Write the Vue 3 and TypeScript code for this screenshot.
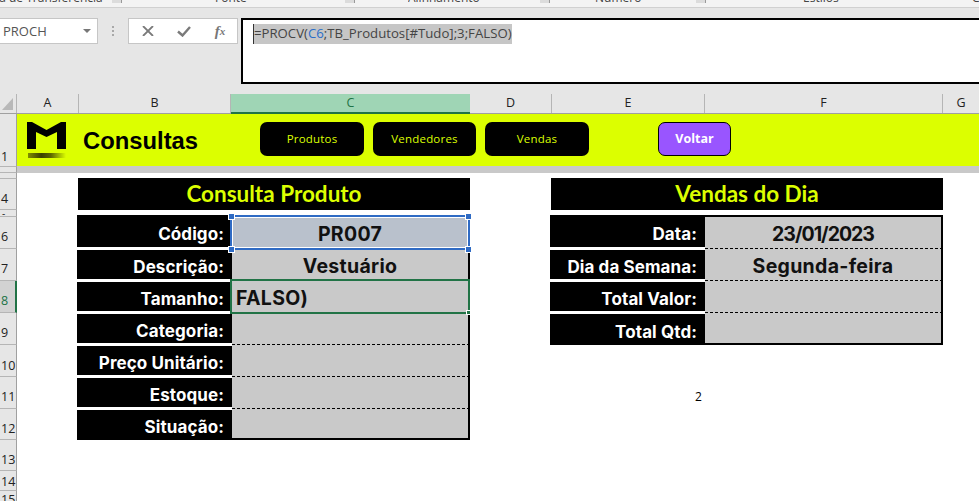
<script setup lang="ts">
const cols = [
  { name: 'A', w: 62 },
  { name: 'B', w: 152 },
  { name: 'C', w: 239, active: true },
  { name: 'D', w: 82 },
  { name: 'E', w: 153 },
  { name: 'F', w: 238 },
  { name: 'G', w: 37 },
]
const rowHeads = [
  { n: '1', h: 53, pad: 2 }, { n: '', h: 6, pad: 0 }, { n: '', h: 6, pad: 0 }, { n: '4', h: 31, pad: 3 }, { n: '-', h: 7, pad: 0, tiny: true },
  { n: '6', h: 32, pad: 4 }, { n: '7', h: 32, pad: 4 }, { n: '8', h: 32, pad: 4, active: true }, { n: '9', h: 32, pad: 4 },
  { n: '10', h: 32, pad: 3 }, { n: '11', h: 32, pad: 4 }, { n: '12', h: 31, pad: 3 }, { n: '13', h: 31, pad: 3 },
  { n: '14', h: 20, pad: 1 }, { n: '15', h: 21, pad: 4 },
]
const ribbon = [
  { t: 'Área de Transferência', w: 235, launcher: 9 },
  { t: 'Fonte', w: 193, launcher: 98 },
  { t: 'Alinhamento', w: 187, launcher: 60 },
  { t: 'Número', w: 208, launcher: 55 },
  { t: 'Estilos', w: 169, launcher: 0 },
  { t: 'C', w: 10, launcher: 0 },
]
const productRows = [
  { label: 'Código:', value: 'PR007', state: 'sel' },
  { label: 'Descrição:', value: 'Vestuário' },
  { label: 'Tamanho:', value: 'FALSO)', state: 'edit' },
  { label: 'Categoria:', value: '' },
  { label: 'Preço Unitário:', value: '' },
  { label: 'Estoque:', value: '' },
  { label: 'Situação:', value: '' },
]
const salesRows = [
  { label: 'Data:', value: '23/01/2023', state: 'tight' },
  { label: 'Dia da Semana:', value: 'Segunda-feira' },
  { label: 'Total Valor:', value: '' },
  { label: 'Total Qtd:', value: '' },
]
</script>

<template>
  <div class="app">
    <div class="ribbon">
      <div class="ribbon-row">
        <span v-for="r in ribbon" :key="r.t" class="ribbon-item" :style="{ width: r.w + 'px' }">
          <span>{{ r.t }}</span>
          <i v-if="r.launcher" class="launch" :style="{ marginLeft: r.launcher + 'px' }"></i>
        </span>
      </div>
    </div>

    <div class="fbar">
      <div class="namebox"><span>PROCH</span><i class="caret"></i></div>
      <div class="grip"><b></b><b></b><b></b></div>
      <div class="fbtns">
        <span class="fbtn"><svg width="12" height="10" viewBox="0 0 12 10"><path d="M1 0l10 10M11 0L1 10" stroke="#7a7a7a" stroke-width="1.8" fill="none" /></svg></span>
        <span class="fbtn"><svg width="14" height="11" viewBox="0 0 14 11"><path d="M1 5.5l4.5 4L13 1" stroke="#7a7a7a" stroke-width="2.4" fill="none" /></svg></span>
        <span class="fbtn fx">f<small>x</small></span>
      </div>
      <div class="formula">
        <span class="fsel">=PROCV(<em>C6</em>;TB_Produtos[#Tudo];3;FALSO)</span>
      </div>
    </div>

    <div class="colheads">
      <div class="corner"><i></i></div>
      <div v-for="c in cols" :key="c.name" class="colhead" :class="{ on: c.active }" :style="{ width: c.w + 'px' }">{{ c.name }}</div>
    </div>

    <div class="sheet">
      <div class="rowheads">
        <div
          v-for="(r, i) in rowHeads"
          :key="i"
          class="rowhead"
          :class="{ on: r.active, tiny: r.tiny }"
          :style="{ height: r.h + 'px', paddingBottom: r.pad + 'px' }"
        >{{ r.n }}</div>
      </div>

      <div class="canvas">
        <div class="banner">
          <svg class="logo" width="40" height="37" viewBox="0 0 40 37">
            <defs>
              <linearGradient id="sh" x1="0" x2="1" y1="0" y2="0">
                <stop offset="0" stop-color="#7f8f00" />
                <stop offset="0.35" stop-color="#3a4000" />
                <stop offset="0.6" stop-color="#5c6600" />
                <stop offset="1" stop-color="#dcff00" />
              </linearGradient>
            </defs>
            <path d="M0 0 H5 L19.5 8 L34 0 H39 V27 H30 V10 L19.5 15 L9 10 V27 H0 Z" fill="#000" />
            <rect x="1" y="31" width="38" height="5" fill="url(#sh)" />
          </svg>
          <span class="brand">Consultas</span>
          <div class="navs">
            <button class="nav">Produtos</button>
            <button class="nav mid">Vendedores</button>
            <button class="nav">Vendas</button>
          </div>
          <button class="back">Voltar</button>
        </div>
        <div class="band"></div>

        <div class="panels">
          <section class="panel left">
            <h2>Consulta Produto</h2>
            <div class="table">
              <div v-for="r in productRows" :key="r.label" class="row">
                <div class="label">{{ r.label }}</div>
                <div class="value" :class="r.state">
                  <span>{{ r.value }}</span>
                  <template v-if="r.state === 'sel'">
                    <i class="frame blue"></i>
                    <i class="h tl"></i><i class="h tr"></i><i class="h bl"></i><i class="h br"></i>
                  </template>
                  <template v-if="r.state === 'edit'">
                    <i class="frame green"></i><i class="fill"></i>
                  </template>
                </div>
              </div>
            </div>
          </section>

          <section class="panel right">
            <h2>Vendas do Dia</h2>
            <div class="table">
              <div v-for="r in salesRows" :key="r.label" class="row">
                <div class="label">{{ r.label }}</div>
                <div class="value" :class="r.state"><span>{{ r.value }}</span></div>
              </div>
            </div>
            <div class="two">2</div>
          </section>
        </div>
      </div>
    </div>
  </div>
</template>

<style scoped>
.app {
  width: 979px;
  height: 501px;
  overflow: hidden;
  background: #fff;
  font-family: "Open Sans", "Liberation Sans", sans-serif;
}
.ribbon {
  height: 8px;
  box-sizing: border-box;
  background: #f3f3f3;
  border-bottom: 1px solid #d0d0d0;
  overflow: hidden;
}
.ribbon-row {
  display: flex;
  margin: -10px 0 0 -20px;
  height: 16px;
  line-height: 16px;
  font-size: 12px;
  color: #444;
  white-space: nowrap;
}
.ribbon-item { display: flex; align-items: flex-start; flex: none; overflow: hidden; }
.launch {
  flex: none;
  width: 10px;
  height: 13px;
  box-sizing: border-box;
  background: #dcdcdc;
  border-right: 1px solid #999;
}
.fbar {
  height: 86px;
  box-sizing: border-box;
  background: #e6e6e6;
  padding-top: 10px;
  display: flex;
  align-items: flex-start;
}
.namebox {
  width: 98px;
  height: 26px;
  box-sizing: border-box;
  background: #fff;
  border: 1px solid #c6c6c6;
  border-left: 0;
  display: flex;
  align-items: center;
  justify-content: space-between;
  padding: 0 6px 0 3px;
  font-size: 13px;
  color: #555;
}
.caret {
  width: 0;
  height: 0;
  border-left: 4px solid transparent;
  border-right: 4px solid transparent;
  border-top: 4px solid #777;
}
.grip {
  width: 30px;
  height: 26px;
  display: flex;
  flex-direction: column;
  align-items: center;
  justify-content: center;
  gap: 2px;
}
.grip b { width: 2px; height: 2px; background: #a8a8a8; }
.fbtns {
  width: 110px;
  height: 26px;
  box-sizing: border-box;
  background: #fff;
  border: 1px solid #c6c6c6;
  display: flex;
  align-items: center;
  padding-left: 1px;
}
.fbtn {
  flex: none;
  width: 36px;
  display: flex;
  align-items: center;
  justify-content: center;
}
.fx {
  font-family: "Liberation Serif", serif;
  font-style: italic;
  font-weight: 700;
  font-size: 15px;
  color: #777;
}
.fx small { font-size: 11px; }
.formula {
  width: 738px;
  margin-left: 3px;
  height: 66px;
  box-sizing: border-box;
  background: #fff;
  border: 2px solid #000;
  border-right: 0;
  padding: 1px 0 0 10px;
}
.fsel {
  display: inline-block;
  height: 20px;
  line-height: 18px;
  background: #c6c6c6;
  border-left: 1px solid #333;
  font-size: 13.2px;
  color: #444;
  white-space: nowrap;
}
.fsel em { font-style: normal; color: #2a6fc9; }
.colheads {
  display: flex;
  height: 20px;
  background: #e6e6e6;
  box-sizing: border-box;
  border-bottom: 1px solid #a0a0a0;
}
.corner {
  width: 17px;
  flex: none;
  box-sizing: border-box;
  border-right: 1px solid #b5b5b5;
  position: relative;
}
.corner i {
  position: absolute;
  left: 2px;
  bottom: 3px;
  width: 0;
  height: 0;
  border-left: 11px solid transparent;
  border-bottom: 12px solid #b8b8b8;
}
.colhead {
  flex: none;
  box-sizing: border-box;
  border-right: 1px solid #b5b5b5;
  text-align: center;
  font-size: 12.5px;
  line-height: 18px;
  color: #222;
}
.colhead.on {
  background: #9fd5b5;
  color: #217346;
  height: 20px;
  border-right: 0;
  border-bottom: 2px solid #217346;
}
.sheet { display: flex; }
.rowheads { width: 17px; flex: none; background: #e6e6e6; }
.rowhead {
  box-sizing: border-box;
  border-right: 1px solid #a0a0a0;
  border-bottom: 1px solid #b5b5b5;
  font-size: 12.5px;
  line-height: 15px;
  color: #222;
  padding-left: 1px;
  display: flex;
  align-items: flex-end;
  overflow: hidden;
}
.rowhead.tiny { line-height: 6px; font-size: 10px; align-items: flex-start; padding-left: 2px; }
.rowhead.on {
  background: #d2d2d2;
  color: #217346;
  border-right: 2px solid #217346;
}
.canvas { flex: 1; min-width: 0; }
.banner {
  height: 52px;
  background: #dcff00;
  display: flex;
  align-items: flex-start;
  padding: 8px 0 0 10px;
  box-sizing: border-box;
}
.logo { flex: none; margin-right: 16px; }
.brand {
  font-family: "Liberation Sans", Arial, sans-serif;
  font-weight: 700;
  font-size: 23.8px;
  line-height: 38px;
  color: #000;
  width: 177px;
  flex: none;
}
.navs { display: flex; gap: 9px; flex: none; }
.nav {
  width: 104px;
  height: 34px;
  border: 0;
  border-radius: 7px;
  background: #000;
  color: #dcff00;
  font-family: "Open Sans", sans-serif;
  font-size: 11.5px;
  letter-spacing: 0.2px;
  padding: 0 0 2px;
}
.nav.mid { width: 103px; }
.back {
  margin-left: 69px;
  width: 73px;
  height: 34px;
  box-sizing: border-box;
  border: 1px solid #000;
  border-radius: 7px;
  background: #9955ff;
  color: #fff;
  font-family: "Open Sans", sans-serif;
  font-weight: 700;
  font-size: 12.5px;
  padding: 0 0 2px;
}
.band { height: 7px; background: #c9c9c9; }
.panels {
  display: flex;
  padding: 5px 0 0 60px;
}
.panel { position: relative; flex: none; }
.panel.left { width: 393px; }
.panel.right { width: 393px; margin-left: 80px; }
.panel h2 {
  margin: 0 0 5px 1px;
  height: 32px;
  line-height: 32px;
  background: #000;
  color: #dcff00;
  text-align: center;
  font-family: "Lato", "Open Sans", sans-serif;
  font-weight: 700;
  font-size: 22.5px;
}
.row { display: flex; height: 32px; }
.row:first-child { height: 34px; }
.left .row:last-child { height: 31px; }
.label {
  flex: none;
  width: 155px;
  box-sizing: border-box;
  background: #000;
  color: #fff;
  border-top: 1px solid #fff;
  border-bottom: 2px solid #fff;
  padding: 4px 8px 0 0;
  display: flex;
  align-items: center;
  justify-content: flex-end;
  font-family: "Inter", sans-serif;
  font-weight: 700;
  font-size: 17px;
  letter-spacing: 0.1px;
  white-space: nowrap;
}
.row:first-child .label { border-top: 0; padding-top: 6px; }
.row:last-child .label { border-bottom: 0; }
.value {
  flex: 1;
  position: relative;
  box-sizing: border-box;
  background: #c9c9c9;
  border-right: 2px solid #000;
  border-bottom: 1px dashed #000;
  padding-top: 2px;
  display: flex;
  align-items: center;
  justify-content: center;
  font-family: "Inter", sans-serif;
  font-weight: 700;
  font-size: 19.5px;
  letter-spacing: 0.3px;
  color: #111;
  white-space: nowrap;
}
.row:first-child .value { border-top: 2px solid #000; }
.row:last-child .value { border-bottom: 2px solid #000; }
.value.sel { background: #b9c1cc; z-index: 2; }
.value.edit { justify-content: flex-start; padding-left: 4px; z-index: 1; }
.value.tight { letter-spacing: -1px; }
.frame {
  position: absolute;
  pointer-events: none;
  box-sizing: border-box;
}
.frame.blue {
  left: -2px;
  right: -2px;
  top: -2px;
  bottom: -2px;
  border: 2px solid #2f6bc4;
  outline: 1px solid #fff;
  outline-offset: -3px;
}
.frame.green {
  left: -2px;
  right: -2px;
  top: -2px;
  bottom: -2px;
  border: 2px solid #217346;
}
.h {
  position: absolute;
  width: 7px;
  height: 7px;
  box-sizing: border-box;
  background: #2f6bc4;
  border: 1px solid #fff;
}
.h.tl { left: -4px; top: -4px; }
.h.tr { right: -4px; top: -4px; }
.h.bl { left: -4px; bottom: -5px; }
.h.br { right: -4px; bottom: -5px; }
.fill {
  position: absolute;
  right: -3px;
  bottom: -3px;
  box-sizing: content-box;
  width: 3px;
  height: 3px;
  background: #217346;
  border: 1px solid #fff;
}
.two {
  position: absolute;
  left: 145px;
  top: 210px;
  font-family: "Open Sans", sans-serif;
  font-size: 12px;
  color: #000;
}
</style>
